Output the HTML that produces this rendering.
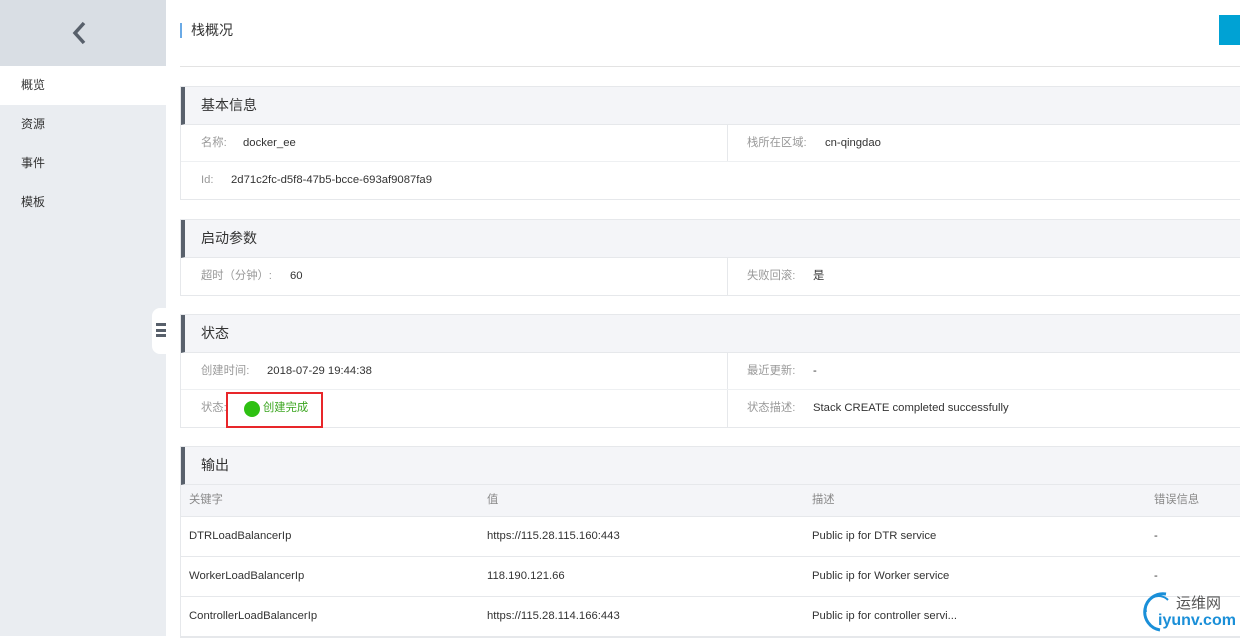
<!DOCTYPE html>
<html><head><meta charset="utf-8"><style>
*{box-sizing:border-box;margin:0;padding:0}
body{width:1240px;height:636px;overflow:hidden;background:#fff;font-family:"Liberation Sans","Noto Sans CJK SC",sans-serif;font-size:12px;color:#333;position:relative}
.side{position:absolute;left:0;top:0;width:166px;height:636px;background:#eaedf1}
.side .top{height:66px;background:#d9dee4;position:relative}
.side .item{height:39px;line-height:39px;padding-left:21px;font-size:12px;color:#333}
.side .act{background:#fff}
.main{position:absolute;left:180px;top:0;width:1060px}
.title{position:absolute;left:0;font-size:14px;color:#333;padding-left:9px;border-left:2px solid #6aaae6;height:15px;line-height:15px;top:23px}
.hr{position:absolute;left:0;top:66px;width:1060px;height:1px;background:#e3e3e3}
.btn{position:absolute;left:1039px;top:15px;width:30px;height:30px;background:#00a2d4}
.panel{position:absolute;left:0;width:1060px;border:1px solid #e6e8eb;border-right:none}
.ph{height:38px;line-height:37px;background:#f4f5f8;border-left:4px solid #59616c;padding-left:16px;font-size:14px;color:#333;border-bottom:1px solid #e6e8eb}
.row{height:37px;border-bottom:1px solid #eef0f2;position:relative;line-height:36px}
.row:last-child{border-bottom:none}
.c{position:absolute;top:0;font-size:11.3px}
.l{color:#999}
.split{position:absolute;left:546px;top:0;height:100%;border-left:1px solid #e6e8eb}
.th{height:32px;line-height:30px;background:#f4f5f8;color:#888;position:relative;border-bottom:1px solid #e6e8eb}
.tr{height:40px;line-height:39px;position:relative;border-bottom:1px solid #e6e8eb}
</style></head><body>
<div class="side">
<div class="top"><svg style="position:absolute;left:70px;top:21px" width="18" height="24" viewBox="0 0 18 24"><path d="M14 2 L5 12 L14 22" stroke="#58606b" stroke-width="3.5" fill="none"/></svg></div>
<div class="item act">概览</div><div class="item">资源</div><div class="item">事件</div><div class="item">模板</div>
<div style="position:absolute;left:152px;top:308px;width:14px;height:46px;background:#fff;border-radius:8px 0 0 8px"></div>
<div style="position:absolute;left:156px;top:323px;width:10px;height:14px;border-top:3px solid #58606b;border-bottom:3px solid #58606b"><div style="margin-top:2.5px;height:3px;background:#58606b"></div></div>
</div>
<div class="main">
<div class="title">栈概况</div>
<div class="btn"></div>
<div class="hr"></div>
<div class="panel" style="top:86px">
<div class="ph">基本信息</div>
<div class="row"><span class="c l" style="left:20px">名称:</span><span class="c" style="left:62px">docker_ee</span><div class="split"></div><span class="c l" style="left:566px">栈所在区域:</span><span class="c" style="left:644px">cn-qingdao</span></div>
<div class="row"><span class="c l" style="left:20px">Id:</span><span class="c" style="left:50px">2d71c2fc-d5f8-47b5-bcce-693af9087fa9</span></div>
</div>
<div class="panel" style="top:219px">
<div class="ph">启动参数</div>
<div class="row"><span class="c l" style="left:20px">超时（分钟）:</span><span class="c" style="left:109px">60</span><div class="split"></div><span class="c l" style="left:566px">失败回滚:</span><span class="c" style="left:632px">是</span></div>
</div>
<div class="panel" style="top:314px">
<div class="ph">状态</div>
<div class="row"><span class="c l" style="left:20px">创建时间:</span><span class="c" style="left:86px">2018-07-29 19:44:38</span><div class="split"></div><span class="c l" style="left:566px">最近更新:</span><span class="c" style="left:632px">-</span></div>
<div class="row"><span class="c l" style="left:20px">状态:</span><div class="split"></div><span class="c l" style="left:566px">状态描述:</span><span class="c" style="left:632px">Stack CREATE completed successfully</span>
<div style="position:absolute;left:45px;top:2px;width:97px;height:36px;border:2px solid #e8262a"></div>
<div style="position:absolute;left:63px;top:11px;width:16px;height:16px;border-radius:50%;background:#2ec012"></div>
<span class="c" style="left:82px;color:#3aa51e">创建完成</span></div>
</div>
<div class="panel" style="top:446px">
<div class="ph">输出</div>
<div class="th"><span class="c" style="left:8px">关键字</span><span class="c" style="left:306px">值</span><span class="c" style="left:631px">描述</span><span class="c" style="left:973px">错误信息</span></div>
<div class="tr"><span class="c" style="left:8px">DTRLoadBalancerIp</span><span class="c" style="left:306px">https://115.28.115.160:443</span><span class="c" style="left:631px">Public ip for DTR service</span><span class="c" style="left:973px">-</span></div>
<div class="tr"><span class="c" style="left:8px">WorkerLoadBalancerIp</span><span class="c" style="left:306px">118.190.121.66</span><span class="c" style="left:631px">Public ip for Worker service</span><span class="c" style="left:973px">-</span></div>
<div class="tr"><span class="c" style="left:8px">ControllerLoadBalancerIp</span><span class="c" style="left:306px">https://115.28.114.166:443</span><span class="c" style="left:631px">Public ip for controller servi...</span></div>
</div>
</div>
<svg style="position:absolute;left:1136px;top:588px" width="40" height="46" viewBox="0 0 40 46"><path d="M30 6 A18 18 0 1 0 24 42" stroke="#1a8fd8" stroke-width="3" fill="none"/><path d="M32 12 A13 13 0 0 0 10 24" stroke="#1a8fd8" stroke-width="2" fill="none"/></svg>
<div style="position:absolute;left:1176px;top:592px;font-size:15px;color:#555">运维网</div>
<div style="position:absolute;left:1158px;top:612px;font-size:16px;color:#1a8fd8;font-weight:bold">iyunv.com</div>
</body></html>
